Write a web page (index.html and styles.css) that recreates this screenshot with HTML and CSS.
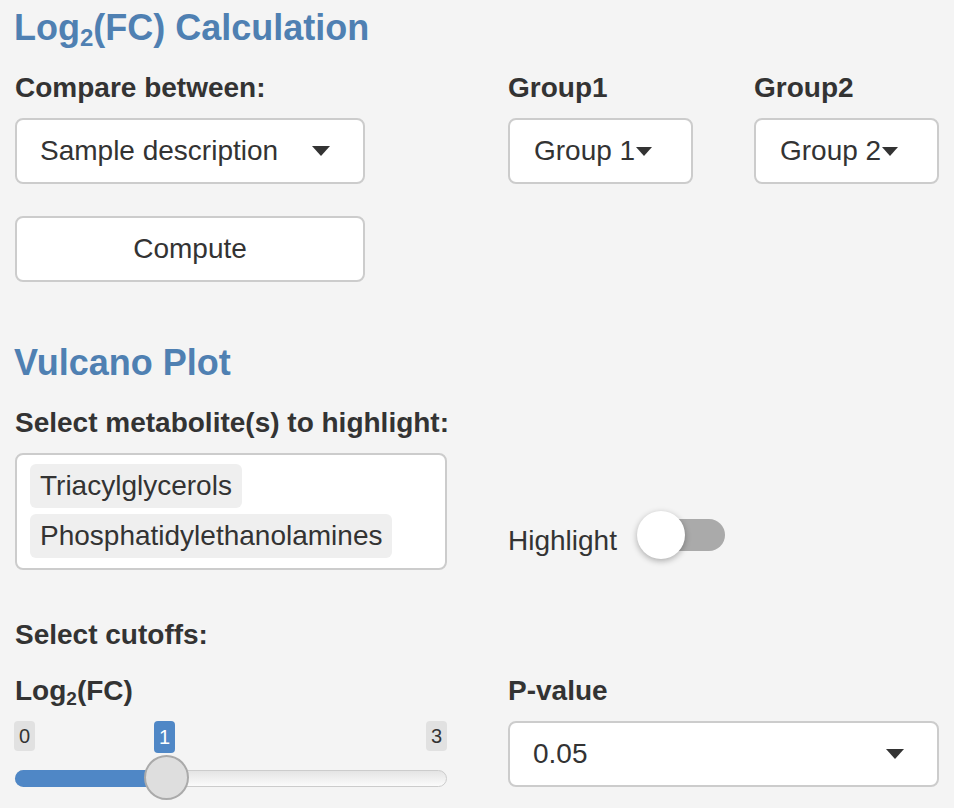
FILE: index.html
```html
<!DOCTYPE html>
<html>
<head>
<meta charset="utf-8">
<link rel="stylesheet" href="styles.css">
</head>
<body>
<div class="page">
  <h4 class="title">Log<sub>2</sub>(FC) Calculation</h4>
  <div class="row">
    <div class="col-left">
      <label class="lbl">Compare between:</label>
      <div class="select wide"><span>Sample description</span><span class="caret"></span></div>
      <div class="btn">Compute</div>
    </div>
    <div class="col-right groups">
      <div class="grp">
        <label class="lbl">Group1</label>
        <div class="select small"><span>Group 1</span><span class="caret"></span></div>
      </div>
      <div class="grp">
        <label class="lbl">Group2</label>
        <div class="select small"><span>Group 2</span><span class="caret"></span></div>
      </div>
    </div>
  </div>

  <h4 class="title t2">Vulcano Plot</h4>
  <div class="row">
    <div class="col-left">
      <label class="lbl l2">Select metabolite(s) to highlight:</label>
      <div class="multi">
        <span class="tag">Triacylglycerols</span>
        <span class="tag">Phosphatidylethanolamines</span>
      </div>
    </div>
    <div class="col-right toggle-wrap">
      <span class="toggle-text">Highlight</span>
      <span class="toggle"><span class="knob"></span></span>
    </div>
  </div>

  <label class="lbl cut">Select cutoffs:</label>
  <div class="row">
    <div class="col-left">
      <label class="lbl">Log<sub>2</sub>(FC)</label>
      <div class="slider">
        <div class="ticks">
          <span class="tick">0</span>
          <span class="tick val">1</span>
          <span class="tick">3</span>
        </div>
        <div class="track"><div class="fill"></div><div class="handle"></div></div>
      </div>
    </div>
    <div class="col-right">
      <label class="lbl">P-value</label>
      <div class="select full"><span>0.05</span><span class="caret"></span></div>
    </div>
  </div>
</div>
</body>
</html>
```
FILE: styles.css
```css
* { box-sizing: border-box; }
html, body { margin: 0; padding: 0; background: #f4f4f4; }
body { font-family: "Liberation Sans", Arial, sans-serif; color: #333; font-size: 28px; }
.page { padding: 0 0 0 15px; width: 954px; height: 808px; overflow: hidden; }
.title { margin: 8px 0 0 -1px; font-size: 36px; line-height: 40px; color: #4f80b2; font-weight: bold; }
.title sub { font-size: 24px; vertical-align: baseline; position: relative; top: 6px; }
.t2 { margin-top: 61px; }
.row { display: flex; gap: 61px; }
.col-left { width: 432px; }
.col-right { width: 431px; }
.lbl { display: block; font-weight: bold; font-size: 28px; line-height: 40px; margin-top: 16px; margin-bottom: 10px; white-space: nowrap; }
.lbl sub { font-size: 19px; vertical-align: baseline; position: relative; top: 5px; }
.l2 { margin-top: 20px; }
.select { background: #fff; border: 2px solid #ccc; border-radius: 8px; height: 66px; display: flex; align-items: center; padding: 0 33px 0 23px; justify-content: space-between; }
.select.wide { width: 350px; }
.select.small { width: 185px; padding: 0 10px 0 24px; justify-content: flex-start; gap: 1px; }
.select.small .caret { border-left-width: 8px; border-right-width: 8px; border-top-width: 9px; }
.select.full { width: 431px; }
.caret { width: 0; height: 0; border-left: 9px solid transparent; border-right: 9px solid transparent; border-top: 10px solid #333; }
.btn { margin-top: 32px; width: 350px; height: 66px; background: #fff; border: 2px solid #ccc; border-radius: 8px; display: flex; align-items: center; justify-content: center; }
.groups { display: flex; gap: 61px; }
.multi { background: #fff; border: 2px solid #ccc; border-radius: 8px; width: 432px; height: 117px; padding: 9px 13px; display: flex; flex-direction: column; align-items: flex-start; gap: 6px; }
.tag { background: #efefef; border-radius: 6px; padding: 0 10px; height: 44px; line-height: 44px; }
.toggle-wrap { display: flex; align-items: center; padding-top: 135px; height: 168px; }
.toggle-text { margin-right: 22px; line-height: 32px; position: relative; top: 6px; }
.toggle { position: relative; width: 86px; height: 32px; background: #aaa; border-radius: 16px; }
.knob { position: absolute; left: -2px; top: -8px; width: 48px; height: 48px; background: #fff; border-radius: 50%; box-shadow: 0 2px 6px rgba(0,0,0,0.3); }
.cut { margin-top: 45px; margin-bottom: 0; }
.slider { width: 432px; }
.ticks { position: relative; height: 34px; margin-top: -3px; }
.tick { position: absolute; top: 0; height: 30px; line-height: 30px; padding: 0 5px; background: #e1e1e1; border-radius: 4px; font-size: 20px; color: #333; }
.tick:first-child { left: -1px; }
.tick:last-child { right: 0; }
.tick.val { left: 139px; background: #4f87c6; color: #fff; height: 32px; line-height: 32px; }
.track { position: relative; margin-top: 15px; height: 17px; background: linear-gradient(#e4e4e4, #fbfbfb); border: 1px solid #ccc; border-radius: 9px; }
.fill { position: absolute; left: -1px; top: -1px; height: 17px; width: 152px; background: #4f87c6; border-radius: 9px 0 0 9px; }
.handle { position: absolute; left: 128px; top: -16px; width: 45px; height: 45px; border-radius: 50%; background: #dedede; border: 2px solid #aaa; }
```
